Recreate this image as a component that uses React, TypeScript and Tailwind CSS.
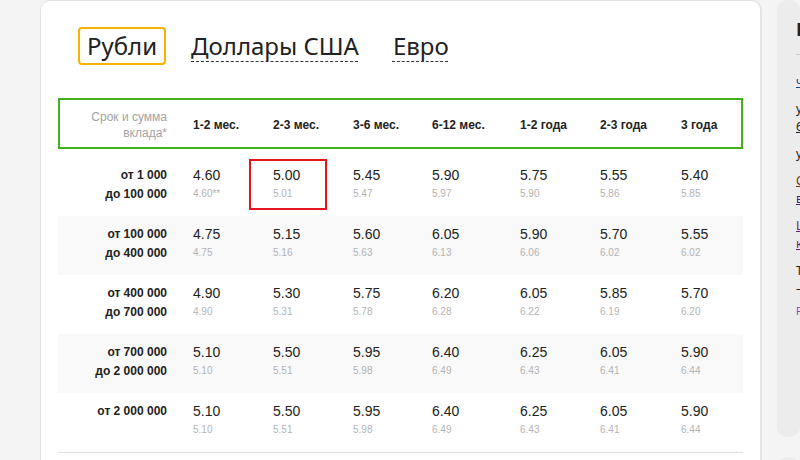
import React from "react";

type Row = { label: string[]; vals: [string, string][] };

const rows: Row[] = [
  {
    label: ["от 1 000", "до 100 000"],
    vals: [["4.60", "4.60**"], ["5.00", "5.01"], ["5.45", "5.47"], ["5.90", "5.97"], ["5.75", "5.90"], ["5.55", "5.86"], ["5.40", "5.85"]],
  },
  {
    label: ["от 100 000", "до 400 000"],
    vals: [["4.75", "4.75"], ["5.15", "5.16"], ["5.60", "5.63"], ["6.05", "6.13"], ["5.90", "6.06"], ["5.70", "6.02"], ["5.55", "6.02"]],
  },
  {
    label: ["от 400 000", "до 700 000"],
    vals: [["4.90", "4.90"], ["5.30", "5.31"], ["5.75", "5.78"], ["6.20", "6.28"], ["6.05", "6.22"], ["5.85", "6.19"], ["5.70", "6.20"]],
  },
  {
    label: ["от 700 000", "до 2 000 000"],
    vals: [["5.10", "5.10"], ["5.50", "5.51"], ["5.95", "5.98"], ["6.40", "6.49"], ["6.25", "6.43"], ["6.05", "6.41"], ["5.90", "6.44"]],
  },
  {
    label: ["от 2 000 000"],
    vals: [["5.10", "5.10"], ["5.50", "5.51"], ["5.95", "5.98"], ["6.40", "6.49"], ["6.25", "6.43"], ["6.05", "6.41"], ["5.90", "6.44"]],
  },
];

const heads = ["1-2 мес.", "2-3 мес.", "3-6 мес.", "6-12 мес.", "1-2 года", "2-3 года", "3 года"];

export default function App() {
  return (
    <div className="w-[800px] h-[460px] bg-[#f4f4f4] flex overflow-hidden font-['Liberation_Sans',Arial,sans-serif] text-[#222]">
      <div className="w-[40px] shrink-0" />
      <div className="w-[722px] shrink-0 h-[480px] bg-white rounded-t-[10px] border-l border-r-2 border-t border-[#e4e4e4] pl-[17px] pr-[17px] pt-[26px]">
        {/* tabs */}
        <div className="flex items-center gap-[16px] pl-[20px] font-['Noto_Sans',sans-serif] text-[24px]">
          <div className="h-[38px] flex items-center border-2 border-[#f5b400] rounded-[4px] px-[7px]">Рубли</div>
          <div className="h-[38px] flex items-center border-2 border-transparent px-[7px]">
            <span className="underline decoration-dashed decoration-1 underline-offset-[6px] decoration-[#333]">Доллары США</span>
          </div>
          <div className="h-[38px] flex items-center border-2 border-transparent px-[7px]">
            <span className="underline decoration-dashed decoration-1 underline-offset-[6px] decoration-[#333]">Евро</span>
          </div>
        </div>

        {/* header */}
        <div className="mt-[33px] h-[51px] border-2 border-[#43b01f] grid grid-cols-[133px_80px_80px_79px_88px_80px_81px_1fr] items-center">
          <div className="text-right pr-[26px] text-[12px] leading-[16px] text-[#a3a3a3] pt-[7px]">
            Срок и сумма
            <br />
            вклада*
          </div>
          {heads.map((h) => (
            <div key={h} className="text-[12px] font-bold pt-[7px]">
              {h}
            </div>
          ))}
          <div />
        </div>

        {/* rows */}
        <div className="pt-[8px] border-b border-[#dedede]">
          {rows.map((r, i) => (
            <div
              key={i}
              className={`grid grid-cols-[135px_80px_80px_79px_88px_80px_81px_1fr] h-[59px] pt-[9px] ${
                i % 2 === 1 ? "bg-[#f9f9f9]" : ""
              }`}
            >
              <div className="text-right pr-[26px] text-[12px] font-bold leading-[19px]">
                {r.label.map((l) => (
                  <div key={l}>{l}</div>
                ))}
              </div>
              {r.vals.map(([a, b], j) => (
                <div key={j} className="relative">
                  {i === 0 && j === 1 && (
                    <div className="absolute left-[-24px] top-[-7px] w-[78px] h-[51px] border-2 border-[#e3161b]" />
                  )}
                  <div className="text-[14px] leading-[19px]">{a}</div>
                  <div className="text-[10px] leading-[17px] text-[#b3b3b3]">{b}</div>
                </div>
              ))}
              <div />
            </div>
          ))}
        </div>
      </div>
      <div className="w-[15px] shrink-0" />
      <div className="flex-1 flex flex-col gap-[20px] min-w-0">
        <div className="h-[437px] shrink-0 bg-[#ececec] rounded-[10px] pl-[19px] pt-[17px] overflow-hidden whitespace-nowrap font-['Noto_Sans',sans-serif]">
          <div className="text-[18px] font-bold leading-[24px]">Бонусы</div>
          <div className="mt-[13px] h-px bg-[#cfcfcf] w-[200px]" />
          <div className="mt-[18px] text-[12px] leading-[18px] flex flex-col">
            <span className="underline text-[#1a3f9a]">что такое</span>
            <span className="underline mt-[9px]">условия вклада</span>
            <span className="underline">6 месяцев</span>
            <span className="underline mt-[9px]">условия</span>
            <span className="underline mt-[9px] text-[#7a2d10]">Сбербанк</span>
            <span className="underline text-[#40207a]">вклады</span>
            <span className="underline mt-[9px] text-[#6a1a7a]">Lorem</span>
            <span className="underline text-[#6a1a7a]">калькулятор</span>
            <span className="mt-[9px]">Тарифы</span>
            <span>—</span>
            <span className="mt-[4px] text-[10px] text-[#8a3fc0]">Реклама</span>
          </div>
        </div>
        <div className="h-[40px] shrink-0 bg-[#ececec] rounded-[10px]" />
      </div>
    </div>
  );
}
